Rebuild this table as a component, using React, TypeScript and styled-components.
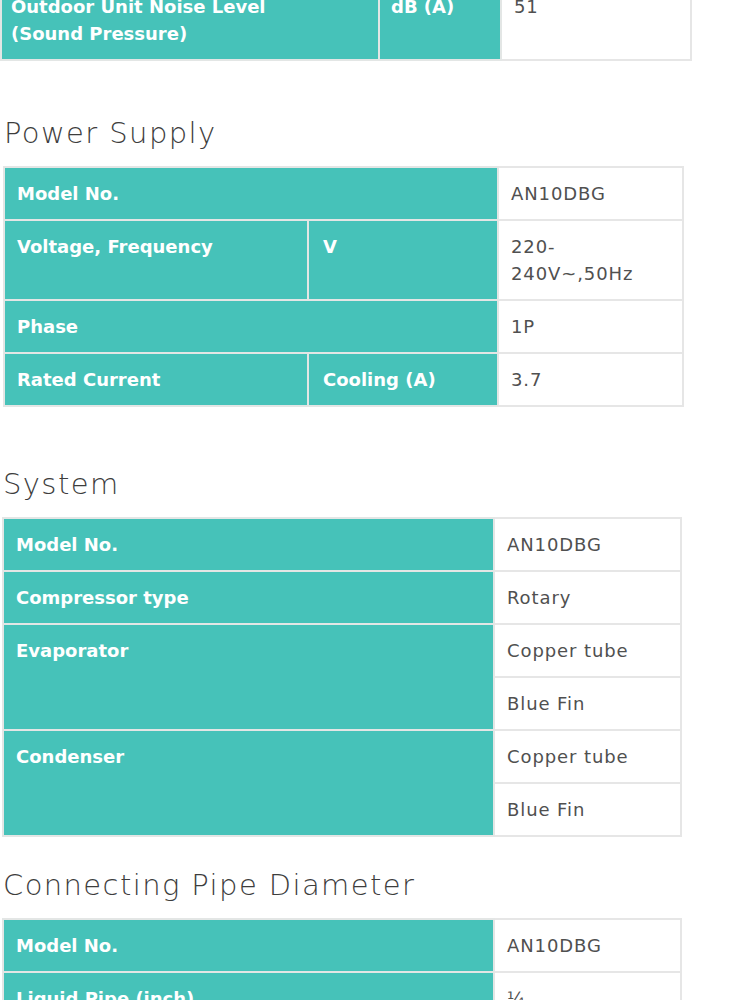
import styled, { createGlobalStyle } from "styled-components";

const GlobalStyle = createGlobalStyle`
  body {
    margin: 0;
    background: #ffffff;
    font-family: "DejaVu Sans", "Liberation Sans", sans-serif;
    overflow: hidden;
  }
`;

type Row = { label: string; unit?: string; values: string[]; labelLines?: string[] };
type Section = {
  title?: string;
  gap: number;
  left: number;
  cols: number[];
  labelPad?: number;
  rows: Row[];
};

const sections: Section[] = [
  {
    gap: -21,
    left: 0,
    cols: [378, 122, 190],
    labelPad: 9,
    rows: [
      {
        label: "Outdoor Unit Noise Level (Sound Pressure)",
        labelLines: ["Outdoor Unit Noise Level", "(Sound Pressure)"],
        unit: "dB (A)",
        values: ["51"],
      },
    ],
  },
  {
    title: "Power Supply",
    gap: 54,
    left: 3,
    cols: [304, 190, 185],
    rows: [
      { label: "Model No.", values: ["AN10DBG"] },
      { label: "Voltage, Frequency", unit: "V", values: ["220-\n240V~,50Hz"] },
      { label: "Phase", values: ["1P"] },
      { label: "Rated Current", unit: "Cooling (A)", values: ["3.7"] },
    ],
  },
  {
    title: "System",
    gap: 59,
    left: 2,
    cols: [491, 187],
    rows: [
      { label: "Model No.", values: ["AN10DBG"] },
      { label: "Compressor type", values: ["Rotary"] },
      { label: "Evaporator", values: ["Copper tube", "Blue Fin"] },
      { label: "Condenser", values: ["Copper tube", "Blue Fin"] },
    ],
  },
  {
    title: "Connecting Pipe Diameter",
    gap: 30,
    left: 2,
    cols: [491, 187],
    rows: [
      { label: "Model No.", values: ["AN10DBG"] },
      { label: "Liquid Pipe (inch)", values: ["¼"] },
      { label: "Gas Pipe (inch)", values: ["⅜"] },
    ],
  },
];

const Page = styled.div`
  display: flex;
  flex-direction: column;
`;

const Heading = styled.h3<{ $gap: number; $left: number }>`
  margin: ${(p) => p.$gap}px 0 15px ${(p) => p.$left + 1}px;
  font-size: 29px;
  line-height: 36px;
  font-weight: 200;
  letter-spacing: 1.4px;
  color: #3d3d3d;
`;

const Table = styled.table<{ $gap: number; $left: number }>`
  margin: ${(p) => p.$gap}px 0 0 ${(p) => p.$left}px;
  border-collapse: collapse;
  table-layout: fixed;
`;

const LabelCell = styled.th<{ $pad: number }>`
  background: #46c2b9;
  color: #ffffff;
  font-weight: 700;
  font-size: 18px;
  line-height: 27px;
  text-align: left;
  vertical-align: top;
  padding: 12px ${(p) => p.$pad}px;
  border: 2px solid #e3e6e5;
`;

const ValueCell = styled.td`
  background: #ffffff;
  color: #505050;
  font-size: 18px;
  line-height: 27px;
  letter-spacing: 0.9px;
  vertical-align: top;
  padding: 12px 12px;
  border: 2px solid #e6e6e6;
  white-space: pre-line;
`;

function SpecTable({ section }: { section: Section }) {
  const pad = section.labelPad ?? 12;
  const hasUnitCol = section.cols.length === 3;
  return (
    <Table $gap={section.title ? 0 : section.gap} $left={section.left}>
      <colgroup>
        {section.cols.map((w, i) => (
          <col key={i} style={{ width: w }} />
        ))}
      </colgroup>
      <tbody>
        {section.rows.map((row) =>
          row.values.map((value, vi) => (
            <tr key={row.label + vi}>
              {vi === 0 && (
                <LabelCell
                  $pad={pad}
                  rowSpan={row.values.length}
                  colSpan={hasUnitCol && !row.unit ? 2 : 1}
                >
                  {row.labelLines
                    ? row.labelLines.map((l, li) => (
                        <span key={li}>
                          {l}
                          {li < row.labelLines!.length - 1 && <br />}
                        </span>
                      ))
                    : row.label}
                </LabelCell>
              )}
              {vi === 0 && row.unit && (
                <LabelCell $pad={pad + 2} rowSpan={row.values.length}>
                  {row.unit}
                </LabelCell>
              )}
              <ValueCell>{value}</ValueCell>
            </tr>
          ))
        )}
      </tbody>
    </Table>
  );
}

export default function App() {
  return (
    <Page>
      <GlobalStyle />
      {sections.map((s, i) => (
        <div key={i}>
          {s.title && (
            <Heading $gap={s.gap} $left={s.left}>
              {s.title}
            </Heading>
          )}
          <SpecTable section={s} />
        </div>
      ))}
    </Page>
  );
}
